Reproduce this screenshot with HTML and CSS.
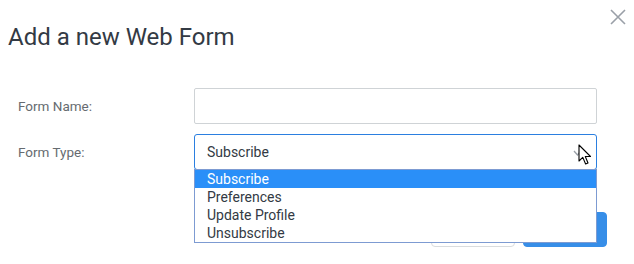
FILE: index.html
```html
<!DOCTYPE html>
<html>
<head>
<meta charset="utf-8">
<link rel="stylesheet" href="styles.css">
</head>
<body>
<div class="modal">
  <div class="header">
    <h1 class="title">Add a new Web Form</h1>
    <button class="close" aria-label="Close">
      <svg width="16" height="16" viewBox="0 0 16 16"><path d="M1 1L15 15M15 1L1 15" stroke="#9aa0a8" stroke-width="1.6" fill="none"/></svg>
    </button>
  </div>
  <div class="form">
    <div class="row">
      <label class="label">Form Name:</label>
      <div class="field"><div class="input"></div></div>
    </div>
    <div class="row">
      <label class="label">Form Type:</label>
      <div class="field">
        <div class="select">
          <span>Subscribe</span>
          <svg class="chev" width="9" height="6" viewBox="0 0 9 6"><path d="M1 1L4.5 5L8 1" stroke="#9aa0a8" stroke-width="1.3" fill="none"/></svg>
          <svg class="cursor" width="14" height="22" viewBox="0 0 14 22"><path d="M1 1L1 17L4.8 13.4L7.6 20L10 19L7.3 12.5L12.5 12.5Z" fill="#fff" stroke="#000" stroke-width="1.1" stroke-linejoin="round"/></svg>
        </div>
        <ul class="options">
          <li class="opt sel">Subscribe</li>
          <li class="opt">Preferences</li>
          <li class="opt">Update Profile</li>
          <li class="opt">Unsubscribe</li>
        </ul>
      </div>
    </div>
  </div>
  <div class="footer">
    <button class="btn cancel">Cancel</button>
    <button class="btn primary">Save</button>
  </div>
</div>
</body>
</html>
```
FILE: styles.css
```css
html, body { margin: 0; padding: 0; background: #fff; }
body { font-family: Roboto, "Liberation Sans", sans-serif; width: 634px; height: 264px; overflow: hidden; }
.modal { position: relative; }
.header { display: flex; justify-content: space-between; align-items: flex-start; padding: 0 8px 0 8px; height: 78px; }
.title { margin: 23px 0 0 0; font-size: 24px; line-height: 28px; font-weight: 400; color: #333a44; }
.close { border: 0; background: none; padding: 0; margin: 9px 0 0 0; width: 16px; height: 16px; display: block; }
.close svg { display: block; }
.form { display: flex; flex-direction: column; gap: 10px; padding: 10px 37px 0 18px; }
.row { display: flex; align-items: center; }
.label { width: 176px; font-size: 13.5px; line-height: 16px; color: #666b70; }
.field { flex: 1; position: relative; }
.input { height: 34px; border: 1px solid #cfd3d6; border-radius: 2px; background: #fff; }
.select { position: relative; height: 34px; border: 1px solid #2b7fe0; border-radius: 3px; display: flex; align-items: center; padding-left: 12px; font-size: 14px; color: #333a44; }
.chev { position: absolute; right: 14px; top: 15px; }
.cursor { position: absolute; left: 383px; top: 9px; }
.options { position: absolute; left: 0; right: 0; top: 35px; margin: 0; padding: 0; list-style: none; background: #fff; border: 1px solid #7d9bd2; z-index: 5; }
.opt { height: 18px; line-height: 18px; padding-left: 12px; font-size: 14px; color: #333a44; }
.opt.sel { background: #2a8ff8; color: #fff; }
.footer { display: flex; justify-content: flex-end; gap: 8px; padding: 42px 27px 0 0; }
.btn { width: 84px; height: 35px; border-radius: 4px; font-family: inherit; font-size: 14px; }
.cancel { background: #fff; border: 1px solid #d9dcde; color: #333; }
.primary { background: #378ee8; border: 1px solid #378ee8; color: #fff; }
```
